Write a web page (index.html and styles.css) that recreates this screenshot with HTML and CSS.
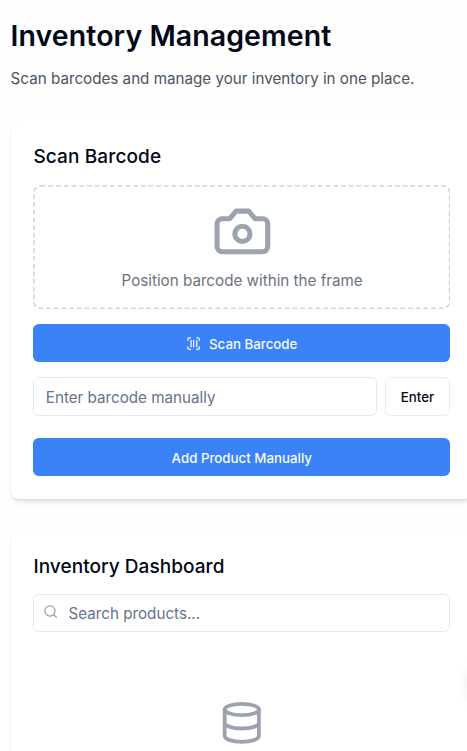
FILE: index.html
```html
<!DOCTYPE html>
<html lang="en">
<head>
<meta charset="utf-8">
<title>Inventory Management</title>
<link rel="stylesheet" href="styles.css">
</head>
<body>
<main class="page">
  <h1 class="title">Inventory Management</h1>
  <p class="subtitle">Scan barcodes and manage your inventory in one place.</p>
  <section class="card">
    <h2 class="heading heading-scan">Scan Barcode</h2>
    <div class="frame">
      <svg class="frame-border"><rect class="frame-dash" x="0.9" y="0.7" width="415.6" height="122.6" rx="6.8"/></svg>
      <svg class="icon camera" viewBox="0 0 24 24"><path d="M14.5 4h-5L7 7H4a2 2 0 0 0-2 2v9a2 2 0 0 0 2 2h16a2 2 0 0 0 2-2V9a2 2 0 0 0-2-2h-3l-2.5-3z"/><circle cx="12" cy="13" r="3"/></svg>
      <p class="hint">Position barcode within the frame</p>
    </div>
    <button class="button primary">
      <svg class="icon scan" viewBox="0 0 24 24"><path d="M3 7V5a2 2 0 0 1 2-2h2M17 3h2a2 2 0 0 1 2 2v2M21 17v2a2 2 0 0 1-2 2h-2M7 21H5a2 2 0 0 1-2-2v-2M8 7v10M12 7v10M17 7v10"/></svg>
      <span>Scan Barcode</span>
    </button>
    <div class="row">
      <input class="input" type="text" placeholder="Enter barcode manually">
      <button class="button outline">Enter</button>
    </div>
    <button class="button primary">Add Product Manually</button>
  </section>
  <section class="card dashboard">
    <h2 class="heading heading-dash">Inventory Dashboard</h2>
    <label class="search">
      <svg class="icon lens" viewBox="0 0 24 24"><circle cx="11" cy="11" r="8"/><path d="m21 21-4.3-4.3"/></svg>
      <input class="input search-input" type="text" placeholder="Search products...">
    </label>
    <div class="empty">
      <svg class="icon database" viewBox="0 0 24 24"><ellipse cx="12" cy="5" rx="9" ry="3"/><path d="M3 5v14a9 3 0 0 0 18 0V5M3 12a9 3 0 0 0 18 0"/></svg>
    </div>
  </section>
</main>
<div class="floating"></div>
</body>
</html>
```
FILE: styles.css
```css
* { box-sizing: border-box; }

html, body { height: 100%; overflow: hidden; }

body {
  margin: 0;
  background: #fefefe;
  color: #020817;
  font: 15.2px/22.8px Inter, "Liberation Sans", sans-serif;
}

h1, h2, p { margin: 0; }

.page {
  width: 473px;
  height: 751px;
  overflow: hidden;
  padding: 19px 0 0 10.6px;
}

.title {
  font-size: 28.5px;
  font-weight: 600;
  line-height: 34.2px;
  letter-spacing: 0.07px;
  white-space: nowrap;
}

.subtitle { margin-top: 15.2px; color: #4b5563; white-space: nowrap; }

.card {
  display: flex;
  flex-direction: column;
  margin-top: 29.8px;
  padding: 22.8px;
  border-radius: 7.6px;
  background: #fff;
  box-shadow: 0 3.8px 5.7px -1px rgba(0, 0, 0, .1), 0 1.9px 3.8px -2px rgba(0, 0, 0, .1);
}

.dashboard { margin-top: 30.8px; }

.heading {
  margin-bottom: 14.4px;
  font-size: 19px;
  font-weight: 500;
  line-height: 26.6px;
}

.heading-scan { letter-spacing: 0.13px; }
.heading-dash { margin-bottom: 13.4px; padding-top: 1px; letter-spacing: 0.06px; }

.icon {
  flex: none;
  fill: none;
  stroke: currentColor;
  stroke-width: 2;
  stroke-linecap: round;
  stroke-linejoin: round;
}

.frame {
  position: relative;
  display: flex;
  flex-direction: column;
  align-items: center;
  height: 124px;
  margin-bottom: 15.2px;
  padding: 16.2px 0 0 0.6px;
}

.frame-border {
  position: absolute;
  inset: 0;
  width: 100%;
  height: 100%;
}

.frame-dash {
  fill: none;
  stroke: #d1d5db;
  stroke-width: 1.5;
  stroke-dasharray: 4.8 2.9;
}

.camera { width: 60.8px; height: 60.8px; color: #9ca3af; }
.hint { margin-top: 8.3px; color: #6b7280; }

.button {
  display: flex;
  align-items: center;
  justify-content: center;
  height: 38.2px;
  padding: 2.5px 15.2px 0;
  border: 0;
  border-radius: 5.7px;
  font: 500 13.3px/19px Inter, "Liberation Sans", sans-serif;
}

.primary { background: #3b82f6; color: #f8fafc; }
.scan { width: 15.2px; height: 15.2px; margin: -2px 7.6px 0 0; }

.row { display: flex; gap: 7.6px; margin: 15.2px 0 22.6px; }

.outline {
  width: 65.5px;
  border: 1px solid #e8edf3;
  background: #fff;
  color: #020817;
}

.input {
  flex: 1;
  min-width: 0;
  height: 38.2px;
  padding: 2px 11.4px 0;
  border: 1px solid #e5eaf0;
  border-radius: 5.7px;
  background: #fff;
  font: inherit;
}

.input::placeholder { color: #64748b; opacity: 1; }

.search { position: relative; display: flex; }
.search-input { padding-left: 34.2px; }

.lens {
  position: absolute;
  left: 9.5px;
  top: 10px;
  width: 15.2px;
  height: 15.2px;
  color: #9ca3af;
}

.empty { display: flex; justify-content: center; padding: 68.4px 0 80px; }
.database { width: 45.6px; height: 45.6px; color: #9ca3af; }

/* Shadow of the action button sitting just past the right edge */
.floating {
  position: fixed;
  left: 470px;
  top: 662px;
  width: 46px;
  height: 46px;
  border-radius: 50%;
  box-shadow: 0 0 14px rgba(0, 0, 0, .13);
}
```
